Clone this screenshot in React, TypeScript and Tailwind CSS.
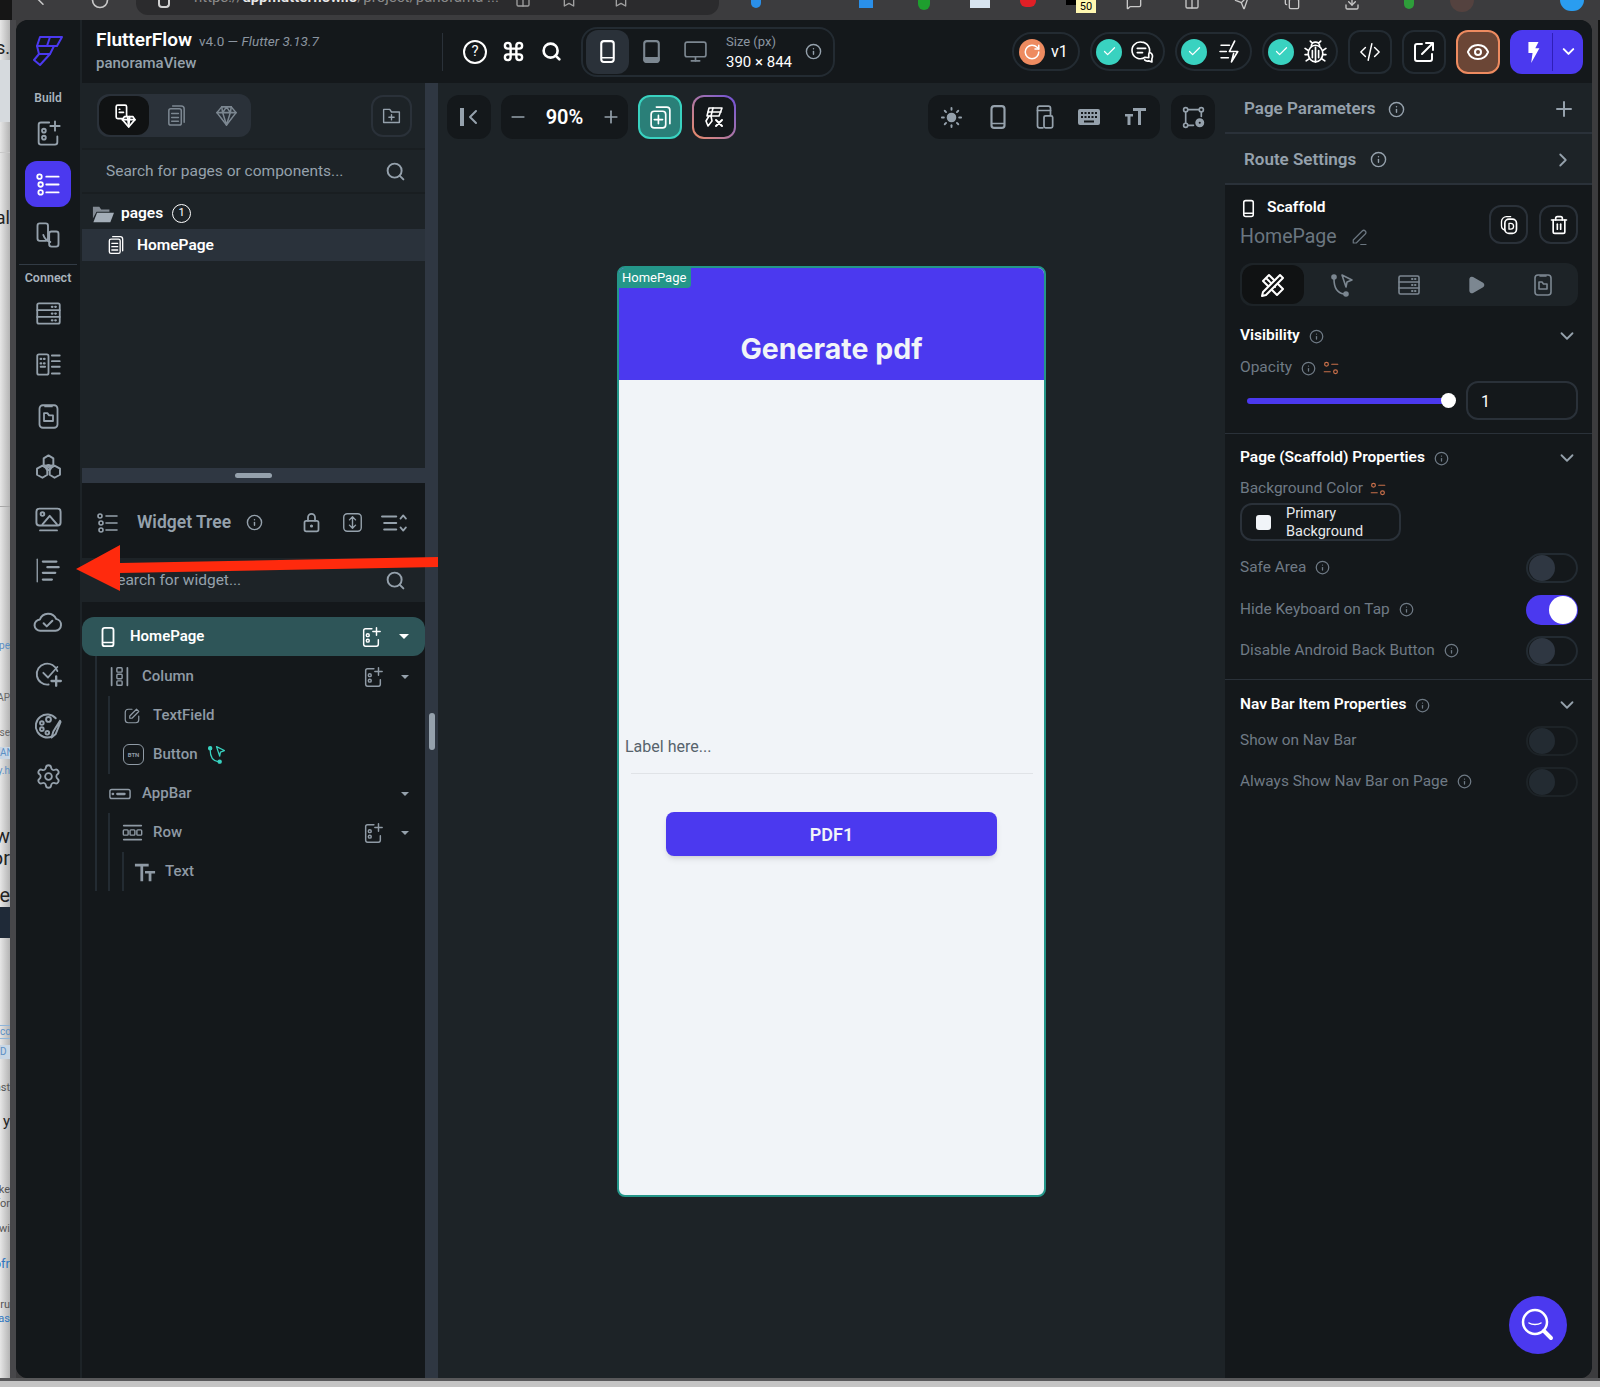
import type { ReactNode } from "react";
import {
  ArrowLeft,
  Bookmark,
  Check,
  ChevronDown,
  ChevronRight,
  Columns2,
  Command,
  Copy,
  Download,
  Eye,
  Info,
  MessageSquare,
  Minus,
  Monitor,
  Play,
  Plus,
  RotateCw,
  Search,
  Send,
  Settings,
  Sun,
  Trash2,
} from "lucide-react";

function Ic({ size = 24, className = "", children }: { size?: number; className?: string; children: ReactNode }) {
  return (
    <svg width={size} height={size} viewBox="0 0 24 24" fill="none" stroke="currentColor" strokeWidth="1.6" strokeLinecap="round" strokeLinejoin="round" className={className} aria-hidden="true">
      {children}
    </svg>
  );
}

type P = { size?: number; className?: string };

const Logo = () => (
  <svg width="30" height="31" viewBox="0 0 30 31" fill="none" stroke="#4b39ef" strokeWidth="2" strokeLinejoin="round" aria-hidden="true">
    <path d="M7 1h22l-5 9H4z" />
    <path d="M4 10h17l-4 8H6z" />
    <path d="M6 18h11L7 29 1 24z" />
    <path d="M17 1l-3 9" />
  </svg>
);

const AddWidget = (p: P) => (
  <Ic {...p}>
    <path d="M13 3H6a2 2 0 0 0-2 2v15a2 2 0 0 0 2 2h12a2 2 0 0 0 2-2v-5" />
    <circle cx="8.5" cy="10" r="1.6" />
    <circle cx="8.5" cy="16" r="1.6" />
    <path d="M18 2v8M14 6h8" />
  </Ic>
);

const TreeList = (p: P) => (
  <Ic {...p}>
    <circle cx="4" cy="5" r="2" />
    <circle cx="5" cy="12" r="2" />
    <circle cx="5" cy="19" r="2" />
    <path d="M10 5h11M10 12h11M10 19h11" />
  </Ic>
);

const LinkedPhones = (p: P) => (
  <Ic {...p}>
    <rect x="3" y="2" width="9" height="15" rx="2" />
    <rect x="13" y="9" width="8" height="13" rx="2" />
    <path d="M8 12c1 3 3 5 6 6" />
  </Ic>
);

const Server = (p: P) => (
  <Ic {...p}>
    <rect x="2" y="3" width="20" height="18" rx="1.5" />
    <path d="M2 9h20M2 15h20" />
    <path d="M15 6h.5M18 6h.5M15 12h.5M18 12h.5M15 18h.5M18 18h.5" strokeWidth="2" />
  </Ic>
);

const PhoneList = (p: P) => (
  <Ic {...p}>
    <rect x="2" y="3" width="10" height="18" rx="1.5" />
    <path d="M5 7h.5M8 7h.5M5 11h.5M8 11h.5" strokeWidth="2" />
    <path d="M5 14h4M15 4h7M15 9h7M15 14h7M15 20h7" />
  </Ic>
);

const PhoneFolder = (p: P) => (
  <Ic {...p}>
    <rect x="4" y="2" width="16" height="20" rx="3" />
    <path d="M9 3h6" />
    <path d="M8 9h3l1.5 2H16v5H8z" />
  </Ic>
);

const HexCluster = (p: P) => (
  <Ic {...p}>
    <path d="M12 2l4 2.5v5L12 12 8 9.5v-5z" />
    <path d="M7 10.5l4 2.5v5l-4 2.5-4.5-2.5v-5z" />
    <path d="M17 10.5l4.5 2.5v5L17 20.5 13 18v-5z" />
    <circle cx="12" cy="12" r="2" />
  </Ic>
);

const ImagePanel = (p: P) => (
  <Ic {...p}>
    <rect x="2" y="3" width="20" height="14" rx="2.5" />
    <circle cx="7" cy="7.5" r="1.5" />
    <path d="M7 16l6-7 6 7" />
    <path d="M5 21h14" />
  </Ic>
);

const AlignLines = (p: P) => (
  <Ic {...p}>
    <path d="M2 2v20" strokeWidth="1.2" />
    <path d="M7 4h12M11 9h10M7 14h11M7 20h8" strokeWidth="2" />
  </Ic>
);

const CloudOk = (p: P) => (
  <Ic {...p}>
    <path d="M6 19a4.5 4.5 0 0 1-.5-9A7 7 0 0 1 18.5 9.5 4.8 4.8 0 0 1 18 19z" />
    <path d="M8.5 13l2.5 2.5 4.5-4.5" />
  </Ic>
);

const CheckPlus = (p: P) => (
  <Ic {...p}>
    <path d="M20 9.5A9 9 0 1 0 12.5 21" />
    <path d="M8 11l4 4 8-9" />
    <path d="M19 14v8M15 18h8" strokeWidth="2" />
  </Ic>
);

const PaletteBrush = (p: P) => (
  <Ic {...p}>
    <path d="M15 21a9.5 9.5 0 1 1 3-15" />
    <circle cx="12" cy="7" r="2" />
    <circle cx="6.5" cy="10" r="1.5" />
    <circle cx="6.5" cy="15" r="1.5" />
    <circle cx="11" cy="18" r="1.5" />
    <path d="M21.5 8L16 17l-1.5 5 3.5-3 4-10z" />
  </Ic>
);

const VarIcon = (p: P) => (
  <Ic {...p}>
    <circle cx="6" cy="7" r="2.5" />
    <path d="M13 7h8M3 17h8" />
    <circle cx="18" cy="17" r="2.5" />
  </Ic>
);

const TabletGlyph = (p: P) => (
  <Ic {...p}>
    <rect x="5" y="2" width="14" height="20" rx="2.5" strokeWidth="2" />
    <path d="M5 18h14v2a2 2 0 0 1-2 2H7a2 2 0 0 1-2-2z" fill="currentColor" />
  </Ic>
);

const Widgets = (p: P) => (
  <Ic {...p}>
    <rect x="4" y="2" width="10" height="13" rx="1.5" />
    <path d="M7 6h.5M7 9h4" />
    <path d="M12 13h8l2 3-6 7-6-7z" fill="#14181b" />
    <path d="M10 16h12M15 13l1 10 1-10" />
  </Ic>
);

const Pages = (p: P) => (
  <Ic {...p}>
    <rect x="4" y="5" width="13" height="17" rx="2" />
    <path d="M8 2h9a3 3 0 0 1 3 3v14" />
    <path d="M7 10h7M7 14h7M7 18h7" />
  </Ic>
);

const Gem = (p: P) => (
  <Ic {...p}>
    <path d="M7 3h10l5 6-10 13L2 9z" />
    <path d="M2 9h20M8 9l4 13 4-13M7 3l1 6M17 3l-1 6M12 3l-4 6M12 3l4 6" />
  </Ic>
);

const FolderPlus = (p: P) => (
  <Ic {...p}>
    <path d="M3 5h7l2 3h9v12H3z" />
    <path d="M12 11v6M9 14h6" />
  </Ic>
);

const OpenFolder = (p: P) => (
  <svg width={p.size ?? 24} height={p.size ?? 24} viewBox="0 0 24 24" aria-hidden="true" className={p.className} fill="currentColor">
    <path d="M1 4h7l2 3h9v2.5H5L1 17z" opacity="0.75" />
    <path d="M5.5 10.5H24L20 21H1.5z" />
  </svg>
);

const Collapse = (p: P) => (
  <Ic {...p}>
    <path d="M5 3v18" strokeWidth="4" strokeLinecap="butt" />
    <path d="M19 6l-6 6 6 6" strokeWidth="2" />
  </Ic>
);

const PageAdd = (p: P) => (
  <Ic {...p}>
    <rect x="3" y="6" width="14" height="16" rx="3" />
    <path d="M8 2h10a3 3 0 0 1 3 3v13" />
    <path d="M10 10v8M6 14h8" />
  </Ic>
);

const ToolsX = (p: P) => (
  <Ic {...p}>
    <path d="M7 3h13l-3 8H5z" />
    <path d="M11 3l-2 8M6 7h13" />
    <path d="M7 11l-3 5 2 5 4-5-1-5" />
    <path d="M14 15l6 6M20 15l-6 6" strokeWidth="2" />
  </Ic>
);

const PhoneFrame = (p: P) => (
  <Ic {...p}>
    <rect x="6" y="2" width="12" height="20" rx="2.5" strokeWidth="2" />
    <path d="M7 18h10" />
  </Ic>
);

const PhoneTablet = (p: P) => (
  <Ic {...p}>
    <path d="M11 22H8a2 2 0 0 1-2-2V4a2 2 0 0 1 2-2h8a2 2 0 0 1 2 2v6" />
    <path d="M6 6h12" />
    <rect x="12" y="11" width="8" height="11" rx="1.5" />
  </Ic>
);

const KeyboardSolid = (p: P) => (
  <svg width="24" height="24" viewBox="0 0 24 24" aria-hidden="true" className={p.className} fill="currentColor">
    <path d="M3 4h18a2 2 0 0 1 2 2v12a2 2 0 0 1-2 2H3a2 2 0 0 1-2-2V6a2 2 0 0 1 2-2zm1 3v2h2V7zm3.5 0v2h2V7zM11 7v2h2V7zm3.5 0v2h2V7zM18 7v2h2V7zM4 11v2h2v-2zm3.5 0v2h2v-2zm3.5 0v2h2v-2zm3.5 0v2h2v-2zm3.5 0v2h2v-2zM7 15.5v2h10v-2z" fillRule="evenodd" />
  </svg>
);

const TextSize = (p: P) => (
  <svg width="24" height="24" viewBox="0 0 24 24" aria-hidden="true" className={p.className} fill="currentColor">
    <path d="M10 3h13v3h-5v14h-3V6h-5zM2 9h8v2.6H7.5V20h-3v-8.4H2z" />
  </svg>
);

const NodesGear = (p: P) => (
  <Ic {...p}>
    <circle cx="4.5" cy="4.5" r="2" />
    <circle cx="19.5" cy="4.5" r="2" />
    <circle cx="4.5" cy="19.5" r="2" />
    <path d="M7 4.5h10M4.5 7v10M7 19.5h5M19.5 7v4" />
    <circle cx="18" cy="17" r="3.5" fill="currentColor" />
    <circle cx="18" cy="17" r="1" fill="#14181b" stroke="none" />
  </Ic>
);

const Chat = (p: P) => (
  <Ic {...p}>
    <path d="M11 3a8 8 0 0 1 7 11.5L18 18l-3.5-.5A8 8 0 1 1 11 3z" />
    <path d="M7 9h8M7 13h5" />
    <path d="M19 13c3 1 3 4 2 6v3l-3-1c-2 .5-3 0-4-1" />
  </Ic>
);

const FastBolt = (p: P) => (
  <Ic {...p}>
    <path d="M15 2l-5 10h8l-6 10 2-8" />
    <path d="M2 6h8M1 12h6M2 18h7" />
  </Ic>
);

const BugIcon = (p: P) => (
  <Ic {...p}>
    <ellipse cx="12" cy="14" rx="7" ry="8" />
    <path d="M8 7a4 4 0 0 1 8 0M12 8v14M9 4L7 2M15 4l2-2M5 11l-3-2M19 11l3-2M5 15H2M19 15h3M6 19l-3 2M18 19l3 2" />
    <path d="M9 11v7M15 11v7" />
  </Ic>
);

const CodeTag = (p: P) => (
  <Ic {...p}>
    <path d="M7 7l-5 5 5 5M17 7l5 5-5 5M14 3l-4 18" />
  </Ic>
);

const ShareOut = (p: P) => (
  <Ic {...p}>
    <path d="M10 4H5a2 2 0 0 0-2 2v13a2 2 0 0 0 2 2h13a2 2 0 0 0 2-2v-5" strokeWidth="2" />
    <path d="M10 14L21 3M14 3h7v7" strokeWidth="2" />
  </Ic>
);

const BoltSolid = (p: P) => (
  <svg width={p.size ?? 24} height={p.size ?? 24} viewBox="0 0 24 24" aria-hidden="true" fill="currentColor">
    <path d="M7 1h11l-3.5 7H19L10 24l1.5-11H7z" />
  </svg>
);

const Duplicate = (p: P) => (
  <Ic {...p}>
    <rect x="7" y="5" width="14" height="17" rx="5" strokeWidth="2" />
    <path d="M7 18a5 5 0 0 1-4-5V8a6 6 0 0 1 6-6h5" />
    <path d="M12 10h2a3 3 0 0 1 0 7h-2z" />
  </Ic>
);

const PencilLine = (p: P) => (
  <Ic {...p}>
    <path d="M3 20v-4L15 4a2.5 2.5 0 0 1 4 4L7 20z" />
    <path d="M13 22h7" />
  </Ic>
);

const RulerPencil = (p: P) => (
  <Ic {...p}>
    <path d="M8 2L2 8l14 14 6-6z" strokeWidth="2" />
    <path d="M6 6l2 2M9 9l2 2M12 12l2 2" strokeWidth="2" />
    <path d="M19 2l3 3L5 22l-4 1 1-4z" strokeWidth="2" fill="#101213" />
  </Ic>
);

const ActionFlow = (p: P) => (
  <Ic {...p}>
    <circle cx="4" cy="4" r="2" fill="currentColor" />
    <circle cx="16" cy="21" r="2" fill="currentColor" />
    <path d="M4 6c0 9 3 14 10 15" />
    <path d="M12 2l10 5-5 2-1 5z" />
  </Ic>
);

const Lock = (p: P) => (
  <Ic {...p}>
    <rect x="4" y="10" width="16" height="12" rx="2" strokeWidth="2" />
    <path d="M8 10V6a4 4 0 0 1 8 0v4" strokeWidth="2" />
    <circle cx="12" cy="16" r="1" fill="currentColor" />
  </Ic>
);

const UpDownBox = (p: P) => (
  <Ic {...p}>
    <rect x="2" y="2" width="20" height="20" rx="4" />
    <path d="M12 6v12M8.5 9L12 5.5 15.5 9M8.5 15l3.5 3.5 3.5-3.5" />
  </Ic>
);

const SortLines = (p: P) => (
  <Ic {...p}>
    <path d="M1 6h13M3 12h11M3 18h11" strokeWidth="2" />
    <path d="M18 8l2.5-3L23 8M18 16l2.5 3 2.5-3" />
  </Ic>
);

const ColumnIcon = (p: P) => (
  <Ic {...p}>
    <path d="M3 2v20M21 2v20" strokeWidth="2" />
    <rect x="9" y="2" width="6" height="5" rx="1" />
    <rect x="9" y="9.5" width="6" height="5" rx="1" />
    <rect x="9" y="17" width="6" height="5" rx="1" />
  </Ic>
);

const FieldEdit = (p: P) => (
  <Ic {...p}>
    <path d="M12 3H7a4 4 0 0 0-4 4v10a4 4 0 0 0 4 4h10a4 4 0 0 0 4-4v-5" />
    <path d="M9 15v-3l9-9 3 3-9 9z" />
  </Ic>
);

const AppBarIcon = (p: P) => (
  <Ic {...p}>
    <rect x="1" y="7" width="22" height="10" rx="2" />
    <path d="M4 12h.5M9 12h8" strokeWidth="2.5" />
  </Ic>
);

const RowIcon = (p: P) => (
  <Ic {...p}>
    <path d="M2 4h20M2 20h20" strokeWidth="2" />
    <rect x="1.5" y="9" width="5.5" height="6" rx="1" />
    <rect x="9.2" y="9" width="5.5" height="6" rx="1" />
    <rect x="17" y="9" width="5.5" height="6" rx="1" />
  </Ic>
);

const TextIcon = (p: P) => (
  <svg width="22" height="22" viewBox="0 0 24 24" fill="currentColor" aria-hidden="true" className={p.className}>
    <path d="M1 3h15v3h-6v16H7V6H1zM12 11h11v2.6h-4V22h-3v-8.4h-4z" />
  </svg>
);

const BtnIcon = () => (
  <div className="w-[21px] h-[21px] rounded-md border-[1.5px] border-[#8f9aa5] flex items-center justify-center text-[6px] font-bold text-[#8f9aa5] shrink-0">
    BTN
  </div>
);

function ToolBtn({ children, className = "" }: { children: ReactNode; className?: string }) {
  return <div className={`w-[44px] h-[44px] rounded-xl flex items-center justify-center ${className}`}>{children}</div>;
}

function RailIcon({ children, active }: { children: ReactNode; active?: boolean }) {
  return (
    <div className={`w-[46px] h-[46px] rounded-xl flex items-center justify-center ${active ? "bg-[#4b39ef] text-white" : "text-[#95a1ac]"}`}>
      {children}
    </div>
  );
}

function LeftRail() {
  return (
    <div className="w-[66px] shrink-0 bg-[#14181b] border-r-2 border-[#1d2327] flex flex-col items-center">
      <div className="h-[27px] pt-[6px] text-[12px] font-semibold text-[#a8b3bd]">Build</div>
      <div className="flex flex-col items-center gap-[5px]">
        <RailIcon><AddWidget size={28} /></RailIcon>
        <RailIcon active><TreeList size={27} /></RailIcon>
        <RailIcon><LinkedPhones size={28} /></RailIcon>
      </div>
      <div className="w-[58px] h-px bg-[#323b45] mt-[6px]" />
      <div className="h-[25px] pt-[4px] text-[12.5px] font-semibold text-[#a8b3bd]">Connect</div>
      <div className="flex flex-col items-center gap-[5.5px]">
        <RailIcon><Server size={27} /></RailIcon>
        <RailIcon><PhoneList size={27} /></RailIcon>
        <RailIcon><PhoneFolder size={27} /></RailIcon>
        <RailIcon><HexCluster size={29} /></RailIcon>
        <RailIcon><ImagePanel size={29} /></RailIcon>
        <RailIcon><AlignLines size={27} /></RailIcon>
        <RailIcon><CloudOk size={30} /></RailIcon>
        <RailIcon><CheckPlus size={28} /></RailIcon>
        <RailIcon><PaletteBrush size={29} /></RailIcon>
        <RailIcon><Settings size={27} strokeWidth={1.6} /></RailIcon>
      </div>
    </div>
  );
}

function TreeRow({
  icon,
  label,
  add,
  caret,
  extra,
  gap = "gap-[12px]",
}: {
  icon: ReactNode;
  label: string;
  add?: boolean;
  caret?: boolean;
  extra?: ReactNode;
  gap?: string;
}) {
  return (
    <div className="h-[39px] flex items-center pr-[16px] text-[#8f9aa5]">
      <div className={`flex items-center text-[15px] font-medium ${gap}`}>
        {icon}
        <span>{label}</span>
      </div>
      {extra}
      <div className="ml-auto flex items-center gap-[18px]">
        {add && <AddWidget size={22} className="-mr-[1px]" />}
        {caret && <div className="border-x-[4px] border-t-[4px] border-x-transparent border-t-[#95a1ac] w-0 h-0" />}
      </div>
    </div>
  );
}

function LeftPanel() {
  return (
    <div className="w-[343px] shrink-0 flex flex-col">
      <div className="h-[385px] bg-[#1d2327] flex flex-col shrink-0">
        <div className="h-[67px] border-b-2 border-[#191e21] flex items-center justify-between pl-[15px] pr-[13px] shrink-0">
          <div className="w-[154px] h-[43px] rounded-xl bg-[#2a3139] flex items-center p-[2px] text-[#7c8791]">
            <div className="w-[51px] h-[39px] rounded-xl bg-[#101213] flex items-center justify-center text-white">
              <Widgets size={25} />
            </div>
            <div className="w-[56px] flex justify-center"><Pages size={23} /></div>
            <div className="w-[45px] flex justify-center"><Gem size={23} /></div>
          </div>
          <div className="w-[41px] h-[42px] rounded-xl border-2 border-[#2a3139] flex items-center justify-center text-[#95a1ac]">
            <FolderPlus size={21} />
          </div>
        </div>
        <div className="h-[44px] border-b-2 border-[#191e21] flex items-center justify-between pl-[24px] pr-[19px] text-[#95a1ac] shrink-0">
          <span className="text-[15.5px] pt-[2px]">Search for pages or components...</span>
          <Search size={21} strokeWidth={2.2} />
        </div>
        <div className="h-[35px] flex items-center pl-[10px] pt-[4px] gap-[7px] shrink-0">
          <OpenFolder size={22} className="text-[#a4aeb8]" />
          <span className="text-[15.5px] font-semibold text-white">pages</span>
          <div className="w-[19px] h-[19px] rounded-full border-[1.5px] border-white text-[11px] text-white flex items-center justify-center ml-[2px]">1</div>
        </div>
        <div className="h-[32px] bg-[#2a323b] flex items-center pl-[24px] gap-[11px] text-white shrink-0">
          <Pages size={20} />
          <span className="text-[15.5px] font-semibold pt-[1px]">HomePage</span>
        </div>
      </div>
      <div className="h-[15px] bg-[#2f3742] flex items-center justify-center shrink-0">
        <div className="w-[37px] h-[5px] rounded-full bg-[#95a1ac]" />
      </div>
      <div className="h-[75px] bg-[#14181b] flex items-center pt-[4px] pl-[14px] pr-[18px] text-[#95a1ac] shrink-0">
        <TreeList size={24} />
        <span className="ml-[17px] text-[17.5px] font-semibold">Widget Tree</span>
        <Info size={17} className="ml-[15px]" />
        <div className="ml-auto flex items-center">
          <Lock size={21} />
          <UpDownBox size={21} className="ml-[20px]" />
          <SortLines size={26} className="ml-[18px]" />
        </div>
      </div>
      <div className="h-[44px] bg-[#1d2327] flex items-center justify-between pl-[26px] pr-[19px] text-[#95a1ac] shrink-0">
        <span className="text-[15.5px] pt-[1px]">Search for widget...</span>
        <Search size={21} strokeWidth={2.2} />
      </div>
      <div className="flex-1 bg-[#14181b] pt-[15px]">
        <div className="h-[39px] rounded-xl bg-[#2e5558] flex items-center pl-[15px] pr-[16px] text-white">
          <PhoneFrame size={22} />
          <span className="ml-[11px] text-[15px] font-semibold">HomePage</span>
          <div className="ml-auto flex items-center gap-[17px]">
            <AddWidget size={22} />
            <div className="border-x-[5px] border-t-[5px] border-x-transparent border-t-white w-0 h-0" />
          </div>
        </div>
        <div className="ml-[13px] border-l-2 border-[#232b32] pl-[12px] pt-[1px]">
          <TreeRow icon={<ColumnIcon size={21} />} label="Column" gap="gap-[12px]" add caret />
          <div className="border-l-2 border-[#232b32] pl-[13px] -ml-px">
            <TreeRow icon={<FieldEdit size={18} />} label="TextField" />
            <TreeRow
              icon={<BtnIcon />}
              label="Button"
              gap="gap-[9px]"
              extra={<ActionFlow size={19} className="ml-[9px] text-[#39d2c0]" />}
            />
          </div>
          <TreeRow icon={<AppBarIcon size={22} />} label="AppBar" gap="gap-[11px]" caret />
          <div className="border-l-2 border-[#232b32] pl-[12px] -ml-px">
            <TreeRow icon={<RowIcon size={21} />} label="Row" gap="gap-[10px]" add caret />
            <div className="border-l-2 border-[#232b32] pl-[10px]">
              <TreeRow icon={<TextIcon />} label="Text" gap="gap-[9px]" />
            </div>
          </div>
        </div>
      </div>
    </div>
  );
}

function Canvas() {
  return (
    <div className="flex-1 bg-[#1d2327] flex flex-col min-w-0">
      <div className="flex items-center pt-[12px] pl-[9px] pr-[10px] gap-[10px]">
        <ToolBtn className="bg-[#14181b] text-[#95a1ac]"><Collapse size={24} /></ToolBtn>
        <div className="w-[127px] h-[44px] rounded-xl bg-[#14181b] flex items-center justify-between px-[7px] text-[#95a1ac]">
          <Minus size={20} />
          <span className="text-[20px] font-semibold text-white">90%</span>
          <Plus size={20} />
        </div>
        <ToolBtn className="bg-[#2a7f78] border-2 border-[#39d2c0] text-white"><PageAdd size={25} /></ToolBtn>
        <div className="w-[44px] h-[44px] rounded-xl p-[2px] bg-linear-to-tr from-[#ee8b60] to-[#6f4bd8]">
          <div className="w-full h-full rounded-[10px] bg-[#14181b] flex items-center justify-center text-white">
            <ToolsX size={24} />
          </div>
        </div>
        <div className="ml-auto w-[232px] h-[44px] rounded-xl bg-[#14181b] flex items-center text-[#95a1ac]">
          <div className="w-[48px] flex justify-center"><Sun size={23} fill="currentColor" strokeWidth={2} /></div>
          <div className="w-[46px] flex justify-center"><PhoneFrame size={26} /></div>
          <div className="w-[46px] flex justify-center"><PhoneTablet size={26} /></div>
          <div className="w-[44px] flex justify-center"><KeyboardSolid /></div>
          <div className="w-[50px] flex justify-center"><TextSize /></div>
        </div>
        <ToolBtn className="bg-[#14181b] text-[#95a1ac] ml-px"><NodesGear size={25} /></ToolBtn>
      </div>
      <div className="relative mx-auto mt-[127px] w-[429px] h-[931px] rounded-lg border-2 border-[#249689] bg-[#f1f4f8] overflow-hidden shrink-0">
        <div className="h-[112px] bg-[#4b39ef] flex items-end justify-center pb-[13px]">
          <span className="text-[28.5px] leading-[36px] font-bold text-[#f1f4f8] font-['Inter',sans-serif]">Generate pdf</span>
        </div>
        <div className="absolute left-0 top-0 h-[20px] w-[72px] rounded-br bg-[#249689] flex items-center pl-[3px] text-[13px] text-white">
          HomePage
        </div>
        <div className="mt-[351px] h-[42px] pb-[10px] mx-[6px] text-[16px] text-[#57636c] flex items-center">Label here...</div>
        <div className="h-px bg-[#e0e3e7] ml-[12px] mr-[11px]" />
        <div className="mt-[38px] mx-[47px] h-[44px] rounded-lg bg-[#4b39ef] shadow-md flex items-center justify-center pt-[1px] text-[18px] font-semibold text-[#f1f4f8]">
          PDF1
        </div>
      </div>
    </div>
  );
}

function Toggle({ on, dim }: { on?: boolean; dim?: boolean }) {
  if (on) {
    return (
      <div className="w-[52px] h-[30px] rounded-full bg-[#4b39ef] flex items-center justify-end pr-[1px]">
        <div className="w-[28px] h-[28px] rounded-full bg-white" />
      </div>
    );
  }
  return (
    <div className={`w-[52px] h-[30px] rounded-full border-2 flex items-center pl-[1px] ${dim ? "border-[#1d2327]" : "border-[#232b32]"}`}>
      <div className={`w-[26px] h-[26px] rounded-full ${dim ? "bg-[#232b32]" : "bg-[#2f3742]"}`} />
    </div>
  );
}

function PropRow({ label, margin, on, dim }: { label: string; margin: string; on?: boolean; dim?: boolean }) {
  return (
    <div className={`h-[30px] flex items-center justify-between ${margin}`}>
      <div className="flex items-center gap-[9px] text-[15.4px] text-[#6f7a85]">
        <span>{label}</span>
        {label !== "Show on Nav Bar" && <Info size={15} className="text-[#6f7a85]" />}
      </div>
      <Toggle on={on} dim={dim} />
    </div>
  );
}

function SectionTitle({ title, className = "" }: { title: string; className?: string }) {
  return (
    <div className={`h-[20px] flex items-center justify-between ${className}`}>
      <div className="flex items-center gap-[9px]">
        <span className="text-[15.5px] font-semibold text-white">{title}</span>
        <Info size={15} className="text-[#6f7a85]" />
      </div>
      <ChevronDown size={22} className="text-[#95a1ac]" />
    </div>
  );
}

function RightPanel() {
  return (
    <div className="w-[367px] shrink-0 flex flex-col">
      <div className="bg-[#1d2327] shrink-0">
        <div className="h-[51px] border-b-2 border-[#2a3139] flex items-center pt-[3px] pl-[19px] pr-[18px] text-[#95a1ac]">
          <span className="text-[17px] font-semibold">Page Parameters</span>
          <Info size={17} className="ml-[12px]" />
          <Plus size={24} className="ml-auto -mr-[2px]" />
        </div>
        <div className="h-[51px] border-b-2 border-[#2a3139] flex items-center pt-[2px] pl-[19px] pr-[18px] text-[#95a1ac]">
          <span className="text-[17px] font-semibold">Route Settings</span>
          <Info size={17} className="ml-[14px]" />
          <ChevronRight size={22} className="ml-auto" />
        </div>
      </div>
      <div className="flex-1 bg-[#14181b]">
        <div className="pl-[15px] pr-[14px]">
          <div className="h-[78px] flex justify-between">
            <div className="pt-[13px]">
              <div className="h-[20px] flex items-center gap-[9px] text-white">
                <PhoneFrame size={19} className="-ml-[1px]" />
                <span className="text-[15.5px] font-semibold">Scaffold</span>
              </div>
              <div className="mt-[5px] h-[28px] flex items-center gap-[14px] text-[#6b7680]">
                <span className="text-[19.5px]">HomePage</span>
                <PencilLine size={18} />
              </div>
            </div>
            <div className="pt-[20px] flex gap-[11px]">
              <div className="w-[39px] h-[39px] rounded-xl border-2 border-[#2a3139] flex items-center justify-center text-white">
                <Duplicate size={20} />
              </div>
              <div className="w-[39px] h-[39px] rounded-xl border-2 border-[#2a3139] flex items-center justify-center text-white">
                <Trash2 size={20} />
              </div>
            </div>
          </div>
          <div className="h-[43px] rounded-xl bg-[#1d2327] p-[2px] grid grid-cols-5 items-center justify-items-center text-[#7c8791]">
            <div className="w-[62px] h-[39px] rounded-xl bg-[#101213] flex items-center justify-center text-white justify-self-start">
              <RulerPencil size={24} />
            </div>
            <ActionFlow size={24} />
            <Server size={24} />
            <Play size={20} fill="currentColor" />
            <PhoneFolder size={24} />
          </div>
          <SectionTitle title="Visibility" className="mt-[20px]" />
          <div className="mt-[12px] h-[20px] flex items-center gap-[9px] text-[15.5px] text-[#6f7a85]">
            <span>Opacity</span>
            <Info size={15} />
            <VarIcon size={18} className="text-[#c86f4a] -ml-[3px]" />
          </div>
          <div className="mt-[3px] h-[39px] flex items-center">
            <div className="ml-[7px] w-[201px] h-[6px] rounded-full bg-[#4b39ef] relative">
              <div className="absolute -right-[8px] -top-[4.5px] w-[15px] h-[15px] rounded-full bg-white" />
            </div>
            <div className="ml-auto w-[112px] h-[39px] rounded-xl border-2 border-[#2a3139] flex items-center pl-[13px] pt-[3px] text-[16px] text-white">1</div>
          </div>
        </div>
        <div className="h-px bg-[#2a3139] mt-[13px]" />
        <div className="pl-[15px] pr-[14px]">
          <SectionTitle title="Page (Scaffold) Properties" className="mt-[14px]" />
          <div className="mt-[11px] h-[20px] flex items-center gap-[9px] text-[15.5px] text-[#6f7a85]">
            <span>Background Color</span>
            <VarIcon size={18} className="text-[#c86f4a] -ml-[3px]" />
          </div>
          <div className="mt-[4px] w-[161px] h-[38px] rounded-xl border-2 border-[#2a3139] flex items-center pl-[14px] gap-[15px]">
            <div className="w-[15px] h-[15px] rounded-[3px] bg-[#f1f4f8]" />
            <span className="text-[14.5px] leading-[18px] text-[#e6e9ec] pt-[1px]">Primary<br />Background</span>
          </div>
          <PropRow label="Safe Area" margin="mt-[12px]" />
          <PropRow label="Hide Keyboard on Tap" margin="mt-[12px]" on />
          <PropRow label="Disable Android Back Button" margin="mt-[11px]" />
        </div>
        <div className="h-px bg-[#2a3139] mt-[13px]" />
        <div className="pl-[15px] pr-[14px]">
          <SectionTitle title="Nav Bar Item Properties" className="mt-[15px]" />
          <PropRow label="Show on Nav Bar" margin="mt-[11px]" dim />
          <PropRow label="Always Show Nav Bar on Page" margin="mt-[11px]" dim />
        </div>
      </div>
    </div>
  );
}

function StatusPill({ icon, className = "" }: { icon: ReactNode; className?: string }) {
  return (
    <div className={`h-[39px] rounded-full border-2 border-[#232b32] flex items-center pl-[4px] text-white ${className}`}>
      <div className="w-[26px] h-[26px] rounded-full bg-[#39d2c0] flex items-center justify-center">
        <Check size={15} strokeWidth={2} className="text-white" />
      </div>
      {icon}
    </div>
  );
}

function Header() {
  return (
    <div className="h-[63px] bg-[#14181b] flex items-center shrink-0">
      <div className="w-[66px] h-full flex items-center justify-center border-r-2 border-[#1d2327]">
        <Logo />
      </div>
      <div className="w-[360px] pl-[14px] -mt-[1px]">
        <div className="flex items-baseline gap-[7px]">
          <span className="text-[19px] leading-[22px] font-semibold text-white">FlutterFlow</span>
          <span className="text-[13.5px] text-[#8b95a0]">v4.0 — <i>Flutter 3.13.7</i></span>
        </div>
        <div className="text-[15px] leading-[20px] font-medium text-[#95a1ac] mt-[2px]">panoramaView</div>
      </div>
      <div className="w-px h-[38px] bg-[#2a3139]" />
      <div className="ml-[20px] flex items-center gap-[15px] text-white">
        <div className="w-[24px] h-[24px] rounded-full border-2 border-white flex items-center justify-center text-[15px] leading-none">?</div>
        <Command size={23} strokeWidth={2.5} />
        <Search size={21} strokeWidth={3} className="ml-[1px]" />
      </div>
      <div className="ml-[19px] w-[254px] h-[50px] rounded-2xl border-2 border-[#232b32] flex items-center pl-[3px] text-[#7c8791]">
        <div className="w-[43px] h-[44px] rounded-xl bg-[#2a3139] flex items-center justify-center text-white">
          <PhoneFrame size={25} />
        </div>
        <div className="w-[44px] flex justify-center"><TabletGlyph size={25} /></div>
        <div className="w-[44px] flex justify-center"><Monitor size={25} strokeWidth={1.6} /></div>
        <div className="ml-[9px] text-[13px] leading-[21px]">
          <div className="text-[#8b95a0]">Size (px)</div>
          <div className="text-[15px] text-white">390 × 844</div>
        </div>
        <Info size={17} className="ml-[13px] text-[#95a1ac]" />
      </div>
      <div className="ml-auto pr-[9px] flex items-center gap-[10px]">
        <div className="w-[68px] h-[39px] rounded-full border-2 border-[#232b32] flex items-center pl-[5px] gap-[6px] text-white">
          <div className="w-[26px] h-[26px] rounded-full bg-[#ee8b60] flex items-center justify-center">
            <RotateCw size={18} className="text-white" />
          </div>
          <span className="text-[16px]">v1</span>
        </div>
        <StatusPill icon={<Chat size={25} className="ml-[8px]" />} className="w-[75px]" />
        <StatusPill icon={<FastBolt size={25} className="ml-[12px]" />} className="w-[77px]" />
        <StatusPill icon={<BugIcon size={25} className="ml-[9px]" />} className="w-[76px]" />
        <ToolBtn className="border-2 border-[#232b32] text-white"><CodeTag size={22} /></ToolBtn>
        <ToolBtn className="border-2 border-[#232b32] text-white"><ShareOut size={24} /></ToolBtn>
        <ToolBtn className="bg-[#6b4636] border-2 border-[#ee8b60] text-white"><Eye size={24} strokeWidth={2} /></ToolBtn>
        <div className="w-[73px] h-[44px] rounded-xl bg-[#4b39ef] flex items-center text-white">
          <div className="w-[42px] flex justify-center pl-[4px]"><BoltSolid size={22} /></div>
          <div className="w-px h-[38px] bg-[#2f1fb8]" />
          <div className="flex-1 flex justify-center"><ChevronDown size={19} strokeWidth={2.5} /></div>
        </div>
      </div>
    </div>
  );
}

function BrowserBar() {
  return (
    <div className="h-[20px] bg-[#3c3c3e] flex items-start overflow-hidden shrink-0 text-[#c8c8c8]">
      <div className="w-[12px] h-full bg-[#161616]" />
      <ArrowLeft size={18} className="ml-[22px] -mt-[10px]" />
      <RotateCw size={20} className="ml-[38px] -mt-[10px]" />
      <div className="ml-[26px] w-[583px] h-[15px] rounded-b-xl bg-[#2b2b2d] flex items-start overflow-hidden pl-[22px] text-[15px] leading-none">
        <div className="w-[12px] h-[8px] border-2 border-t-0 border-[#d0d0d0] rounded-b-sm mt-0" />
        <span className="ml-[24px] -mt-[10px] text-[#8a8a8a] whitespace-nowrap">
          https://<b className="text-[#e8e8e8] font-semibold">app.flutterflow.io</b>/project/panorama ...
        </span>
        <Columns2 size={16} className="ml-[16px] -mt-[8px] text-[#a0a0a0]" />
        <Bookmark size={16} className="ml-[30px] -mt-[8px] text-[#a0a0a0]" />
        <Bookmark size={16} className="ml-[36px] -mt-[8px] text-[#a0a0a0]" />
      </div>
      <div className="ml-[32px] w-[10px] h-[8px] rounded-b-full bg-[#2a8fe8]" />
      <div className="ml-[98px] w-[14px] h-[8px] bg-[#2a8fe8]" />
      <div className="ml-[45px] w-[12px] h-[10px] rounded-b-full bg-[#1e9e2e]" />
      <div className="ml-[40px] w-[20px] h-[8px] bg-[#d7e4ef]" />
      <div className="ml-[30px] w-[16px] h-[7px] rounded-b-md bg-[#e01f26]" />
      <div className="ml-[30px] w-[10px] h-[5px] bg-black" />
      <div className="w-[20px] h-[13px] bg-[#fff7b0] text-black text-[11px] leading-[13px] text-center">50</div>
      <MessageSquare size={16} className="ml-[30px] -mt-[6px]" />
      <Columns2 size={16} className="ml-[42px] -mt-[6px]" />
      <Send size={16} className="ml-[34px] -mt-[6px]" />
      <Copy size={16} className="ml-[34px] -mt-[6px]" />
      <Download size={16} className="ml-[44px] -mt-[5px]" />
      <div className="ml-[44px] w-[10px] h-[9px] rounded-b-full bg-[#2e9e3a]" />
      <div className="ml-[36px] w-[24px] h-[12px] rounded-b-full bg-[#54423f]" />
      <div className="ml-[86px] w-[24px] h-[11px] rounded-b-full bg-[#2a9df0]" />
    </div>
  );
}

// what shows of the web page behind the window
function PageSliver() {
  return (
    <div className="w-[16px] shrink-0 h-[1358px] bg-linear-to-r from-[#e6e6e6] to-[#b4b4b4] border-r-[6px] border-[#47474a] overflow-hidden text-[#222] whitespace-nowrap flex flex-col items-end">
      <div className="h-[16px]" />
      <div className="h-[24px] text-[18px] leading-[24px]">s.</div>
      <div className="w-full h-[62px] bg-[#d6dade]" />
      <div className="w-full h-[20px] border-t border-[#c8c8c8] mt-[30px]" />
      <div className="h-[24px] mt-[34px] text-[18px] leading-[24px]">al</div>
      <div className="h-[276px]" />
      <div className="w-full h-[12px] border-t border-[#a8a8a8]" />
      <div className="h-[12px] mt-[122px] text-[10px] leading-[12px] text-[#5b8fc4]">ope</div>
      <div className="h-[12px] mt-[40px] text-[10px] leading-[12px] text-[#666]">AP</div>
      <div className="h-[12px] mt-[23px] text-[10px] leading-[12px] text-[#666]">se</div>
      <div className="w-full h-[12px] mt-[8px] text-[10px] leading-[12px] text-[#5b8fc4] bg-[#c8d6e4]">AN</div>
      <div className="h-[12px] mt-[6px] text-[10px] leading-[12px] text-[#5b8fc4]">ry.h</div>
      <div className="h-[22px] mt-[48px] text-[20px] leading-[22px]">w</div>
      <div className="h-[22px] text-[20px] leading-[22px]">or</div>
      <div className="h-[24px] mt-[14px] text-[20px] leading-[24px]">e</div>
      <div className="w-full h-[31px] bg-[#1f2a38]" />
      <div className="w-full h-[14px] mt-[87px] border-y border-[#8fb4d8] text-[10px] leading-[12px] text-[#5b8fc4]">con</div>
      <div className="w-full h-[14px] mt-[6px] bg-[#c8d6e4] text-[10px] leading-[14px] text-[#5b8fc4]">D</div>
      <div className="h-[14px] mt-[22px] text-[11px] leading-[14px] text-[#555]">nst</div>
      <div className="h-[20px] mt-[16px] text-[15px] leading-[20px]">y</div>
      <div className="h-[14px] mt-[52px] text-[11px] leading-[14px] text-[#555]">ske</div>
      <div className="h-[14px] text-[11px] leading-[14px] text-[#555]">for</div>
      <div className="h-[14px] mt-[11px] text-[11px] leading-[14px] text-[#555]">wi</div>
      <div className="h-[16px] mt-[20px] text-[13px] leading-[16px] text-[#2f77c0]">ofr</div>
      <div className="h-[14px] mt-[26px] text-[11px] leading-[14px] text-[#555]">ru</div>
      <div className="h-[14px] text-[11px] leading-[14px] text-[#2f77c0]">nas</div>
    </div>
  );
}

export default function App() {
  return (
    <div className="relative w-[1600px] h-[1387px] overflow-hidden bg-[#3c3c3e] flex flex-col font-['Roboto','Noto_Sans',sans-serif]">
      <BrowserBar />
      <div className="flex h-[1358px] shrink-0">
        <PageSliver />
        <div className="w-[1576px] rounded-xl overflow-hidden flex flex-col bg-[#14181b]">
          <Header />
          <div className="flex flex-1 min-h-0">
            <LeftRail />
            <LeftPanel />
            <div className="w-[13px] shrink-0 bg-[#2f3742] flex flex-col items-center">
              <div className="mt-[630px] w-[6px] h-[37px] rounded-full bg-[#95a1ac]" />
            </div>
            <Canvas />
            <RightPanel />
          </div>
        </div>
        <div className="w-[8px] shrink-0 flex">
          <div className="w-[6px]" />
          <div className="w-[2px] bg-[#111]" />
        </div>
      </div>
      <div className="flex-1 bg-[#c4c4c4] border-t-[3px] border-[#58585a]" />

      {/* annotation arrow and help bubble sit over the page */}
      <svg className="absolute left-0 top-0 pointer-events-none" width="1600" height="1387" aria-hidden="true">
        <polygon points="76,569 120,545 120,563 438,557 438,567 120,573 120,591" fill="#ff2a0d" />
      </svg>
      <div className="absolute left-[1509px] top-[1296px] w-[58px] h-[58px] rounded-full bg-[#4b39ef] flex items-center justify-center">
        <svg width="38" height="38" viewBox="0 0 38 38" fill="none" stroke="white" strokeLinecap="round" aria-hidden="true">
          <circle cx="16" cy="16" r="12" strokeWidth="2.5" />
          <path d="M25 25l7 7" strokeWidth="4" />
          <path d="M10 17c3 2 9 2 12 0" strokeWidth="1.5" />
        </svg>
      </div>
    </div>
  );
}
